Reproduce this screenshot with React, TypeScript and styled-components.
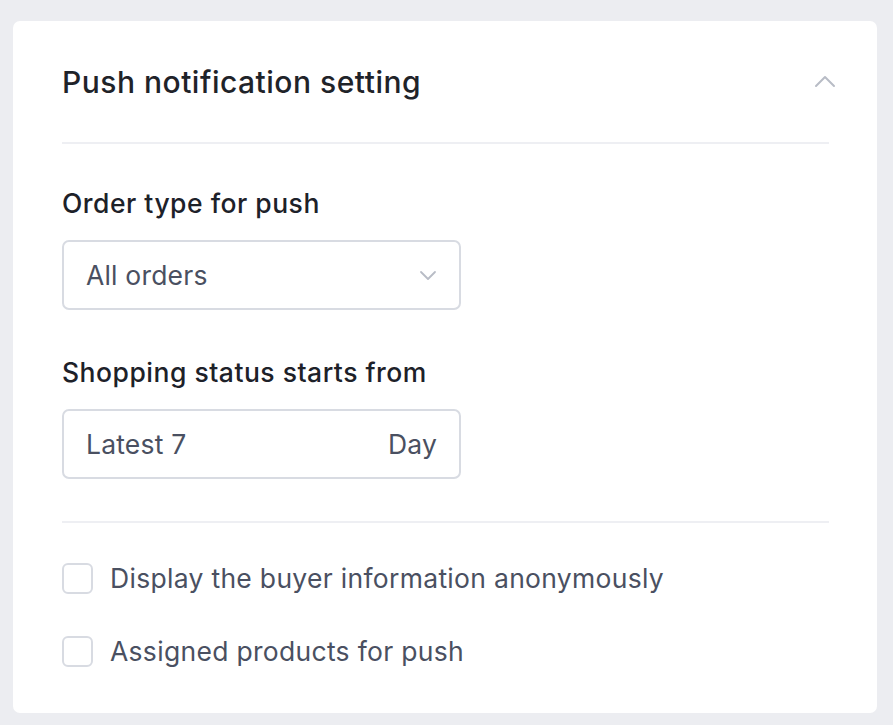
import React, { useState } from 'react';
import styled, { createGlobalStyle } from 'styled-components';

const GlobalStyle = createGlobalStyle`
  html, body {
    margin: 0;
    padding: 0;
    background: #ecedf1;
    font-family: Inter, "Noto Sans", sans-serif;
    -webkit-font-smoothing: antialiased;
  }
`;

const Page = styled.div`
  padding: 21px 16px 12px 13px;
  min-height: 725px;
  box-sizing: border-box;
`;

const Card = styled.section`
  background: #fff;
  border-radius: 7px;
  padding: 0 48px 30px 49px;
  height: 692px;
  box-sizing: border-box;
`;

const Header = styled.div`
  display: flex;
  align-items: center;
  justify-content: space-between;
  height: 121px;
  border-bottom: 2px solid #eeeff3;
`;

const Title = styled.h2`
  margin: 0;
  font-size: 30px;
  font-weight: 500;
  letter-spacing: 0.5px;
  color: #1f2329;
`;

const Toggle = styled.button`
  border: 0;
  background: none;
  padding: 0;
  margin-right: -12px;
  width: 32px;
  height: 32px;
  display: flex;
  align-items: center;
  justify-content: center;
  cursor: pointer;
`;

const Field = styled.div`
  display: flex;
  flex-direction: column;
`;

const Label = styled.label`
  font-size: 26.5px;
  font-weight: 500;
  letter-spacing: 0.5px;
  color: #1d2129;
  margin-bottom: 21px;
  line-height: 32px;
`;

const Body = styled.div`
  padding-top: 43px;
  display: flex;
  flex-direction: column;
  gap: 46px;
  padding-bottom: 42px;
  border-bottom: 2px solid #eeeff3;
`;

const Box = styled.div`
  width: 399px;
  height: 70px;
  box-sizing: border-box;
  border: 2px solid #d8dbe2;
  border-radius: 7px;
  display: flex;
  align-items: center;
  justify-content: space-between;
  padding: 0 22px 0 22px;
  font-size: 26.5px;
  letter-spacing: 0.2px;
  color: #4a5061;
  cursor: pointer;
`;

const Options = styled.div`
  display: flex;
  flex-direction: column;
  gap: 41px;
  padding-top: 39px;
`;

const CheckRow = styled.label`
  display: flex;
  align-items: center;
  gap: 17px;
  font-size: 26.5px;
  letter-spacing: 0.3px;
  line-height: 32px;
  color: #4a5061;
  cursor: pointer;
`;

const CheckBox = styled.span<{ $on: boolean }>`
  width: 31px;
  height: 31px;
  box-sizing: border-box;
  border: 2px solid ${p => (p.$on ? '#3b6cf6' : '#d8dbe2')};
  background: ${p => (p.$on ? '#3b6cf6' : '#fff')};
  border-radius: 6px;
  flex-shrink: 0;
`;

const Chevron = ({ up }: { up?: boolean }) => (
  <svg width="22" height="13" viewBox="0 0 22 13" fill="none">
    <path
      d={up ? 'M2 11 L11 2 L20 11' : 'M2 2 L11 11 L20 2'}
      stroke="#b8bcc6"
      strokeWidth="2"
      strokeLinecap="round"
      strokeLinejoin="round"
    />
  </svg>
);

const SmallChevron = () => (
  <svg width="18" height="11" viewBox="0 0 18 11" fill="none">
    <path d="M2 2 L9 9 L16 2" stroke="#b8bcc6" strokeWidth="1.8" strokeLinecap="round" strokeLinejoin="round" />
  </svg>
);

function Check({ label }: { label: string }) {
  const [on, setOn] = useState(false);
  return (
    <CheckRow onClick={() => setOn(!on)}>
      <CheckBox $on={on} />
      {label}
    </CheckRow>
  );
}

export default function App() {
  const [open, setOpen] = useState(true);
  return (
    <>
      <GlobalStyle />
      <Page>
        <Card>
          <Header>
            <Title>Push notification setting</Title>
            <Toggle onClick={() => setOpen(!open)}>
              <Chevron up={open} />
            </Toggle>
          </Header>
          <Body>
            <Field>
              <Label>Order type for push</Label>
              <Box>
                <span>All orders</span>
                <SmallChevron />
              </Box>
            </Field>
            <Field>
              <Label>Shopping status starts from</Label>
              <Box>
                <span>Latest 7</span>
                <span>Day</span>
              </Box>
            </Field>
          </Body>
          <Options>
            <Check label="Display the buyer information anonymously" />
            <Check label="Assigned products for push" />
          </Options>
        </Card>
      </Page>
    </>
  );
}
